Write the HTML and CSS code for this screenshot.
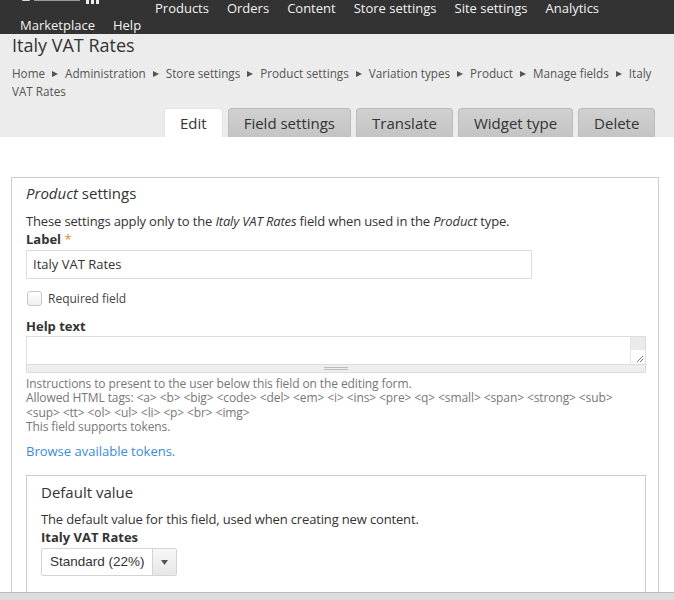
FILE: index.html
```html
<!DOCTYPE html>
<html>
<head>
<meta charset="utf-8">
<link rel="stylesheet" href="styles.css">
</head>
<body>
<div class="topnav">
  <div class="navrow first">
    <div class="logo">
      <svg width="100" height="6" viewBox="0 0 100 6"><rect x="14" y="0" width="8" height="2" rx="1" fill="#d8d8d8"/><rect x="26" y="1" width="46" height="1" fill="#9a9a9a"/><rect x="78" y="0" width="3" height="5" fill="#eeeeee"/><rect x="83" y="0" width="3" height="5" fill="#eeeeee"/><rect x="88" y="0" width="3" height="5" fill="#eeeeee"/></svg>
    </div>
    <a class="navitem">Products</a>
    <a class="navitem">Orders</a>
    <a class="navitem">Content</a>
    <a class="navitem">Store settings</a>
    <a class="navitem">Site settings</a>
    <a class="navitem">Analytics</a>
  </div>
  <div class="navrow second">
    <a class="navitem">Marketplace</a>
    <a class="navitem">Help</a>
  </div>
</div>

<div class="header">
  <h1 class="title">Italy VAT Rates</h1>
  <div class="breadcrumb"><span>Home</span><i class="sep"></i><span>Administration</span><i class="sep"></i><span>Store settings</span><i class="sep"></i><span>Product settings</span><i class="sep"></i><span>Variation types</span><i class="sep"></i><span>Product</span><i class="sep"></i><span>Manage fields</span><i class="sep"></i><span>Italy</span> <span>VAT Rates</span></div>
  <ul class="tabs">
    <li class="tab active">Edit</li>
    <li class="tab">Field settings</li>
    <li class="tab">Translate</li>
    <li class="tab">Widget type</li>
    <li class="tab">Delete</li>
  </ul>
</div>

<div class="content">
  <div class="fieldset">
    <div class="legend"><em>Product</em> settings</div>
    <p class="intro">These settings apply only to the <em>Italy VAT Rates</em> field when used in the <em>Product</em> type.</p>
    <label class="label">Label <span class="req">*</span></label>
    <div class="textinput">Italy VAT Rates</div>
    <div class="checkrow"><span class="checkbox"></span><span class="checklabel">Required field</span></div>
    <label class="label help-label">Help text</label>
    <div class="textarea">
      <div class="ta-body">
        <div class="ta-main"></div>
        <div class="ta-scroll"><div class="ta-scroll-top"></div><div class="ta-scroll-bottom"><svg width="8" height="8" viewBox="0 0 8 8"><path d="M1 7 L7 1 M4 7 L7 4" stroke="#555" stroke-width="0.8"/></svg></div></div>
      </div>
      <div class="grippie"><span class="grip"></span></div>
    </div>
    <div class="description">Instructions to present to the user below this field on the editing form.<br>Allowed HTML tags: &lt;a&gt; &lt;b&gt; &lt;big&gt; &lt;code&gt; &lt;del&gt; &lt;em&gt; &lt;i&gt; &lt;ins&gt; &lt;pre&gt; &lt;q&gt; &lt;small&gt; &lt;span&gt; &lt;strong&gt; &lt;sub&gt;<br>&lt;sup&gt; &lt;tt&gt; &lt;ol&gt; &lt;ul&gt; &lt;li&gt; &lt;p&gt; &lt;br&gt; &lt;img&gt;<br>This field supports tokens.</div>
    <a class="tokens">Browse available tokens.</a>

    <div class="fieldset inner">
      <div class="legend">Default value</div>
      <p class="intro">The default value for this field, used when creating new content.</p>
      <label class="label">Italy VAT Rates</label>
      <div class="select"><span class="select-text">Standard (22%)</span><span class="select-arrow"><svg width="7" height="5" viewBox="0 0 7 5"><path d="M0 0 L7 0 L3.5 5 Z" fill="#555"/></svg></span></div>
    </div>
  </div>
</div>
<div class="bottombar"></div>
</body>
</html>
```

FILE: styles.css
```css
* { box-sizing: border-box; }
html, body { margin: 0; padding: 0; }
body {
  font-family: "Open Sans", "Noto Sans", sans-serif;
  color: #333;
  background: #fff;
  width: 674px;
  overflow: hidden;
  height: 600px;
}
.topnav {
  background: #333;
  height: 34px;
  overflow: hidden;
}
.navrow {
  display: flex;
  align-items: center;
  height: 18px;
  line-height: 18px;
}
.navrow.first { margin-top: -1px; height: 17px; }
.logo {
  width: 146px;
  height: 17px;
  padding-left: 8px;
  align-self: flex-start;
  display: flex;
  align-items: flex-start;
}
.navitem {
  color: #f2f2f2;
  font-size: 13px;
  padding: 0 9px;
  white-space: nowrap;
}
.navrow.second { padding-left: 11px; }

.header {
  background: #ececec;
  padding: 0 12px;
  height: 103px;
  display: flex;
  flex-direction: column;
}
.title {
  margin: 0;
  font-weight: normal;
  font-size: 18px;
  line-height: 22px;
  color: #333;
}
.breadcrumb {
  margin-top: 8px;
  font-size: 11.7px;
  line-height: 18px;
  color: #555;
}
.sep {
  display: inline-block;
  width: 0;
  height: 0;
  border-left: 6px solid #555;
  border-top: 3.5px solid transparent;
  border-bottom: 3.5px solid transparent;
  margin: 0 7px 0 7px;
  vertical-align: 1px;
}
.tabs {
  list-style: none;
  margin: auto 0 0 0;
  padding: 0 0 0 152px;
  display: flex;
  gap: 5px;
}
.tab {
  height: 29px;
  line-height: 28px;
  font-size: 15px;
  padding: 0 15px;
  background: linear-gradient(#d0d0d0, #c4c4c4);
  border: 1px solid #bcbcbc;
  border-bottom: none;
  border-radius: 4px 4px 0 0;
  color: #333;
}
.tab.active {
  background: #fff;
  border-color: #e4e4e4;
}

.content { padding: 40px 15px 0 11px; }
.fieldset {
  border: 1px solid #ccc;
  padding: 3px 11px 0 14px;
  height: 440px;
}
.legend {
  font-size: 15px;
  line-height: 24px;
  color: #333;
}
.intro {
  margin: 7px 0 0;
  font-size: 13px;
  line-height: 18px;
  letter-spacing: -0.15px;
}
.label {
  display: block;
  font-weight: bold;
  font-size: 13px;
  line-height: 19px;
}
.req { color: #e08a3c; font-weight: normal; }
.textinput {
  margin-top: 1px;
  width: 506px;
  height: 29px;
  border: 1px solid #ddd;
  font-size: 13px;
  line-height: 27px;
  padding: 0 6px;
}
.checkrow {
  display: flex;
  align-items: center;
  margin-top: 11px;
  height: 16px;
}
.checkbox {
  width: 15px;
  height: 15px;
  border: 1px solid #c8c8c8;
  border-radius: 3px;
  background: linear-gradient(#fff, #f0f0f0);
  margin-left: 1px;
}
.checklabel { margin-left: 6px; font-size: 12px; color: #444; }
.help-label { margin-top: 11px; }
.textarea {
  margin-top: 0;
  width: 620px;
  height: 37px;
  border: 1px solid #ddd;
  display: flex;
  flex-direction: column;
}
.ta-body { display: flex; flex: 1; }
.ta-main { flex: 1; background: #fff; }
.ta-scroll { width: 15px; display: flex; flex-direction: column; border-left: 1px solid #e5e5e5; }
.ta-scroll-top { height: 13px; background: #ebebeb; }
.ta-scroll-bottom { flex: 1; display: flex; align-items: flex-end; justify-content: flex-end; padding: 0 1px 1px 0; }
.grippie {
  height: 8px;
  background: #eee;
  border-top: 1px solid #ddd;
  display: flex;
  justify-content: center;
  align-items: center;
}
.grip { width: 24px; height: 3px; border-top: 1px solid #bbb; border-bottom: 1px solid #bbb; }
.description {
  margin-top: 4px;
  font-size: 12px;
  line-height: 14.3px;
  color: #777;
  letter-spacing: -0.1px;
}
.tokens {
  display: block;
  margin-top: 8px;
  font-size: 13px;
  line-height: 18px;
  color: #3b8bd6;
}
.fieldset.inner {
  margin-top: 15px;
  width: 620px;
  height: 130px;
  padding: 4px 14px 0 14px;
}
.inner .intro { margin-top: 6px; }
.select {
  margin-top: 1px;
  width: 136px;
  height: 28px;
  border: 1px solid #d4d4d4;
  display: flex;
  border-radius: 2px;
  background: #fff;
}
.select-text {
  flex: 1;
  font-family: "Liberation Sans", Arial, sans-serif;
  font-size: 13.5px;
  line-height: 26px;
  padding-left: 8px;
  color: #333;
}
.select-arrow {
  width: 24px;
  border-left: 1px solid #d4d4d4;
  background: linear-gradient(#f8f8f8, #e6e6e6);
  display: flex;
  align-items: center;
  justify-content: center;
}
.bottombar {
  position: fixed;
  left: 0;
  right: 0;
  bottom: 0;
  height: 8px;
  background: #dcdcdc;
  border-top: 1px solid #bcbcbc;
}
```
